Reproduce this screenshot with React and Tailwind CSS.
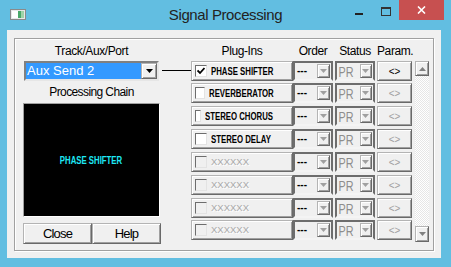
import React from 'react'

// classic win32 bevels
const raised =
  'bg-[#f0f0f0] border border-[#b4b4b4] border-r-[#696969] border-b-[#696969] shadow-[inset_1px_1px_0_#ffffff,inset_-1px_-1px_0_#a0a0a0]'
const sunken = 'border-2 border-[#6d6d6d] border-b-[#f4f4f4]'

const rows = [
  { name: 'PHASE SHIFTER', checked: true, h: 'h-[22px]' },
  { name: 'REVERBERATOR', h: 'h-[23px]' },
  { name: 'STEREO CHORUS', h: 'h-[23px]' },
  { name: 'STEREO DELAY', focus: true, h: 'h-[23px]' },
  { name: 'XXXXXX', disabled: true, h: 'h-[23px]' },
  { name: 'XXXXXX', disabled: true, h: 'h-[23px]' },
  { name: 'XXXXXX', disabled: true, h: 'h-[22px]' },
  { name: 'XXXXXX', disabled: true, h: 'h-[22px]' },
]

function Tri({ up = false, color = '#a0a0a0' }) {
  return (
    <svg width="7" height="4" viewBox="0 0 7 4">
      <path d={up ? 'M0 4 L3.5 0 L7 4 Z' : 'M0 0 L7 0 L3.5 4 Z'} fill={color} />
    </svg>
  )
}

function SmallArrow() {
  return (
    <div className={`${raised} w-[13px] h-[14px] mr-[1px] flex items-center justify-center`}>
      <Tri />
    </div>
  )
}

function Checkbox({ checked, disabled }) {
  return (
    <div
      className={`w-[12px] h-[12px] border border-[#6d6d6d] border-r-[#e3e3e3] border-b-[#e3e3e3] flex items-center justify-center ${
        disabled ? 'bg-[#f0f0f0]' : 'bg-white'
      }`}
    >
      {checked && (
        <svg width="8" height="8" viewBox="0 0 8 8">
          <path d="M0.5 3.5 L3 6 L7.5 1" stroke="#000" strokeWidth="1.8" fill="none" />
        </svg>
      )}
    </div>
  )
}

function Row({ row }) {
  return (
    <div className={`flex ${row.h}`}>
      <div className={`${raised} w-[102px] h-[20px] flex items-center pl-[3px]`}>
        <Checkbox checked={row.checked} disabled={row.disabled} />
        {row.disabled ? (
          <span className="ml-[4px] text-[9.5px] text-[#a8a8a8] [text-shadow:1px_1px_0_#ffffff]">{row.name}</span>
        ) : (
          <span className="ml-[4px] text-[10px] font-bold text-black inline-block origin-left scale-x-[0.78] whitespace-nowrap">
            {row.name}
          </span>
        )}
      </div>
      <div className={`${sunken} w-[40px] h-[20px] flex items-center bg-[#f0f0f0]`}>
        <span className="flex-1 pl-[2px] text-[10px] font-bold text-black leading-none">---</span>
        <SmallArrow />
      </div>
      <div className={`${sunken} ml-[2px] w-[40px] h-[20px] flex items-center bg-[#f0f0f0]`}>
        <span className="flex-1 pl-[2px] text-[15px] leading-none text-[#8d8d8d] inline-block origin-left scale-x-[0.72]">PR</span>
        <SmallArrow />
      </div>
      <div
        className={`${raised} ml-[2px] w-[35px] h-[20px] flex items-center justify-center text-[10px] ${
          row.checked ? 'text-black' : 'text-[#a0a0a0]'
        } ${row.focus ? 'border-[#3a3a3a] border-t-[#8a8a8a] border-l-[#8a8a8a]' : ''}`}
      >
        &lt;&gt;
      </div>
    </div>
  )
}

export default function App() {
  return (
    <div className="w-[451px] h-[267px] bg-[#62bee1] font-['Liberation_Sans',Arial,sans-serif] overflow-hidden">
      {/* title bar */}
      <div className="h-[30px] grid grid-cols-[1fr_auto_1fr]">
        <div className="pl-[10px] pt-[9px]">
          <svg width="16" height="11" viewBox="0 0 16 11">
            <rect x="0.5" y="0.5" width="15" height="10" fill="#e8e8e8" stroke="#8a8a8a" />
            <rect x="2" y="2" width="6" height="7" fill="#ffffff" />
            <rect x="8" y="2" width="3" height="7" fill="#4aa86a" />
            <rect x="11" y="2" width="3" height="7" fill="#9fd4a8" />
          </svg>
        </div>
        <div className="text-[15px] tracking-[-0.4px] text-[#222] leading-[30px]">Signal Processing</div>
        <div className="flex justify-end pr-[7px]">
          <div className="w-[27px] h-[20px] flex justify-center pt-[13px]">
            <div className="w-[8px] h-[2px] bg-[#222]" />
          </div>
          <div className="w-[27px] h-[20px] flex justify-center pt-[7px]">
            <div className="w-[10px] h-[9px] border border-[#333] border-t-2" />
          </div>
          <div className="w-[45px] h-[20px] bg-[#c75050] flex items-center justify-center">
            <svg width="9" height="8" viewBox="0 0 9 8">
              <path d="M1 0.5 L8 7.5 M8 0.5 L1 7.5" stroke="#fff" strokeWidth="1.6" />
            </svg>
          </div>
        </div>
      </div>

      {/* client area */}
      <div className="ml-[7px] w-[434px] h-[228px] bg-[#f0f0f0] pt-[8px] pl-[7px]">
        <div className="w-[420px] h-[213px] border border-[#a0a0a0] shadow-[inset_1px_1px_0_#ffffff,1px_1px_0_#ffffff] flex pt-[1px] pl-[8px] text-black">
          {/* left column */}
          <div className="w-[138px] flex flex-col">
            <div className="h-[21px] w-[137px] flex items-center justify-center text-[12px] tracking-[-0.4px]">
              Track/Aux/Port
            </div>
            <div className="ml-[1px] w-[135px] h-[20px] flex border-2 border-[#808080] border-r-[#e6e6e6] border-b-[#e6e6e6] bg-white">
              <div className="flex-1 bg-[#3399ff] text-white text-[13px] leading-[16px] pl-[1px] whitespace-nowrap">
                Aux Send 2
              </div>
              <div className={`${raised} w-[16px] h-[16px] flex items-center justify-center`}>
                <Tri color="#000" />
              </div>
            </div>
            <div className="h-[22px] w-[137px] flex items-center justify-center text-[12px] tracking-[-0.6px]">
              Processing Chain
            </div>
            <div className="w-[137px] h-[114px] bg-black border border-[#a0a0a0] border-r-white border-b-white flex items-center justify-center">
              <span className="text-[10px] font-bold text-[#1ee8f5] inline-block scale-x-[0.78] whitespace-nowrap">
                PHASE SHIFTER
              </span>
            </div>
            <div className="mt-[6px] flex h-[21px]">
              <div className={`${raised} w-[69px] flex items-center justify-center text-[13px] tracking-[-0.8px]`}>Close</div>
              <div className={`${raised} w-[69px] flex items-center justify-center text-[13px] tracking-[-0.8px]`}>Help</div>
            </div>
          </div>

          {/* connector */}
          <div className="w-[30px] pt-[30px] pl-[1px]">
            <div className="h-px bg-black" />
          </div>

          {/* right column */}
          <div className="w-[238px] flex flex-col">
            <div className="h-[21px] flex items-center text-[12px] tracking-[-0.4px]">
              <div className="w-[102px] text-center">Plug-Ins</div>
              <div className="w-[40px] text-center">Order</div>
              <div className="ml-[2px] w-[40px] text-center">Status</div>
              <div className="ml-[2px] w-[35px] text-center">Param.</div>
            </div>
            <div className="flex">
              <div className="w-[221px] flex flex-col">
                {rows.map((r, i) => (
                  <Row key={i} row={r} />
                ))}
              </div>
              <div className="ml-[3px] w-[14px] h-[181px] flex flex-col">
                <div className={`${raised} h-[15px] flex items-center justify-center`}>
                  <Tri up color="#808080" />
                </div>
                <div className="flex-1 bg-[repeating-conic-gradient(#e6e6e6_0_25%,#ffffff_0_50%)] bg-[length:2px_2px]" />
                <div className={`${raised} h-[16px] flex items-center justify-center`}>
                  <Tri color="#808080" />
                </div>
              </div>
            </div>
          </div>
        </div>
      </div>
    </div>
  )
}
